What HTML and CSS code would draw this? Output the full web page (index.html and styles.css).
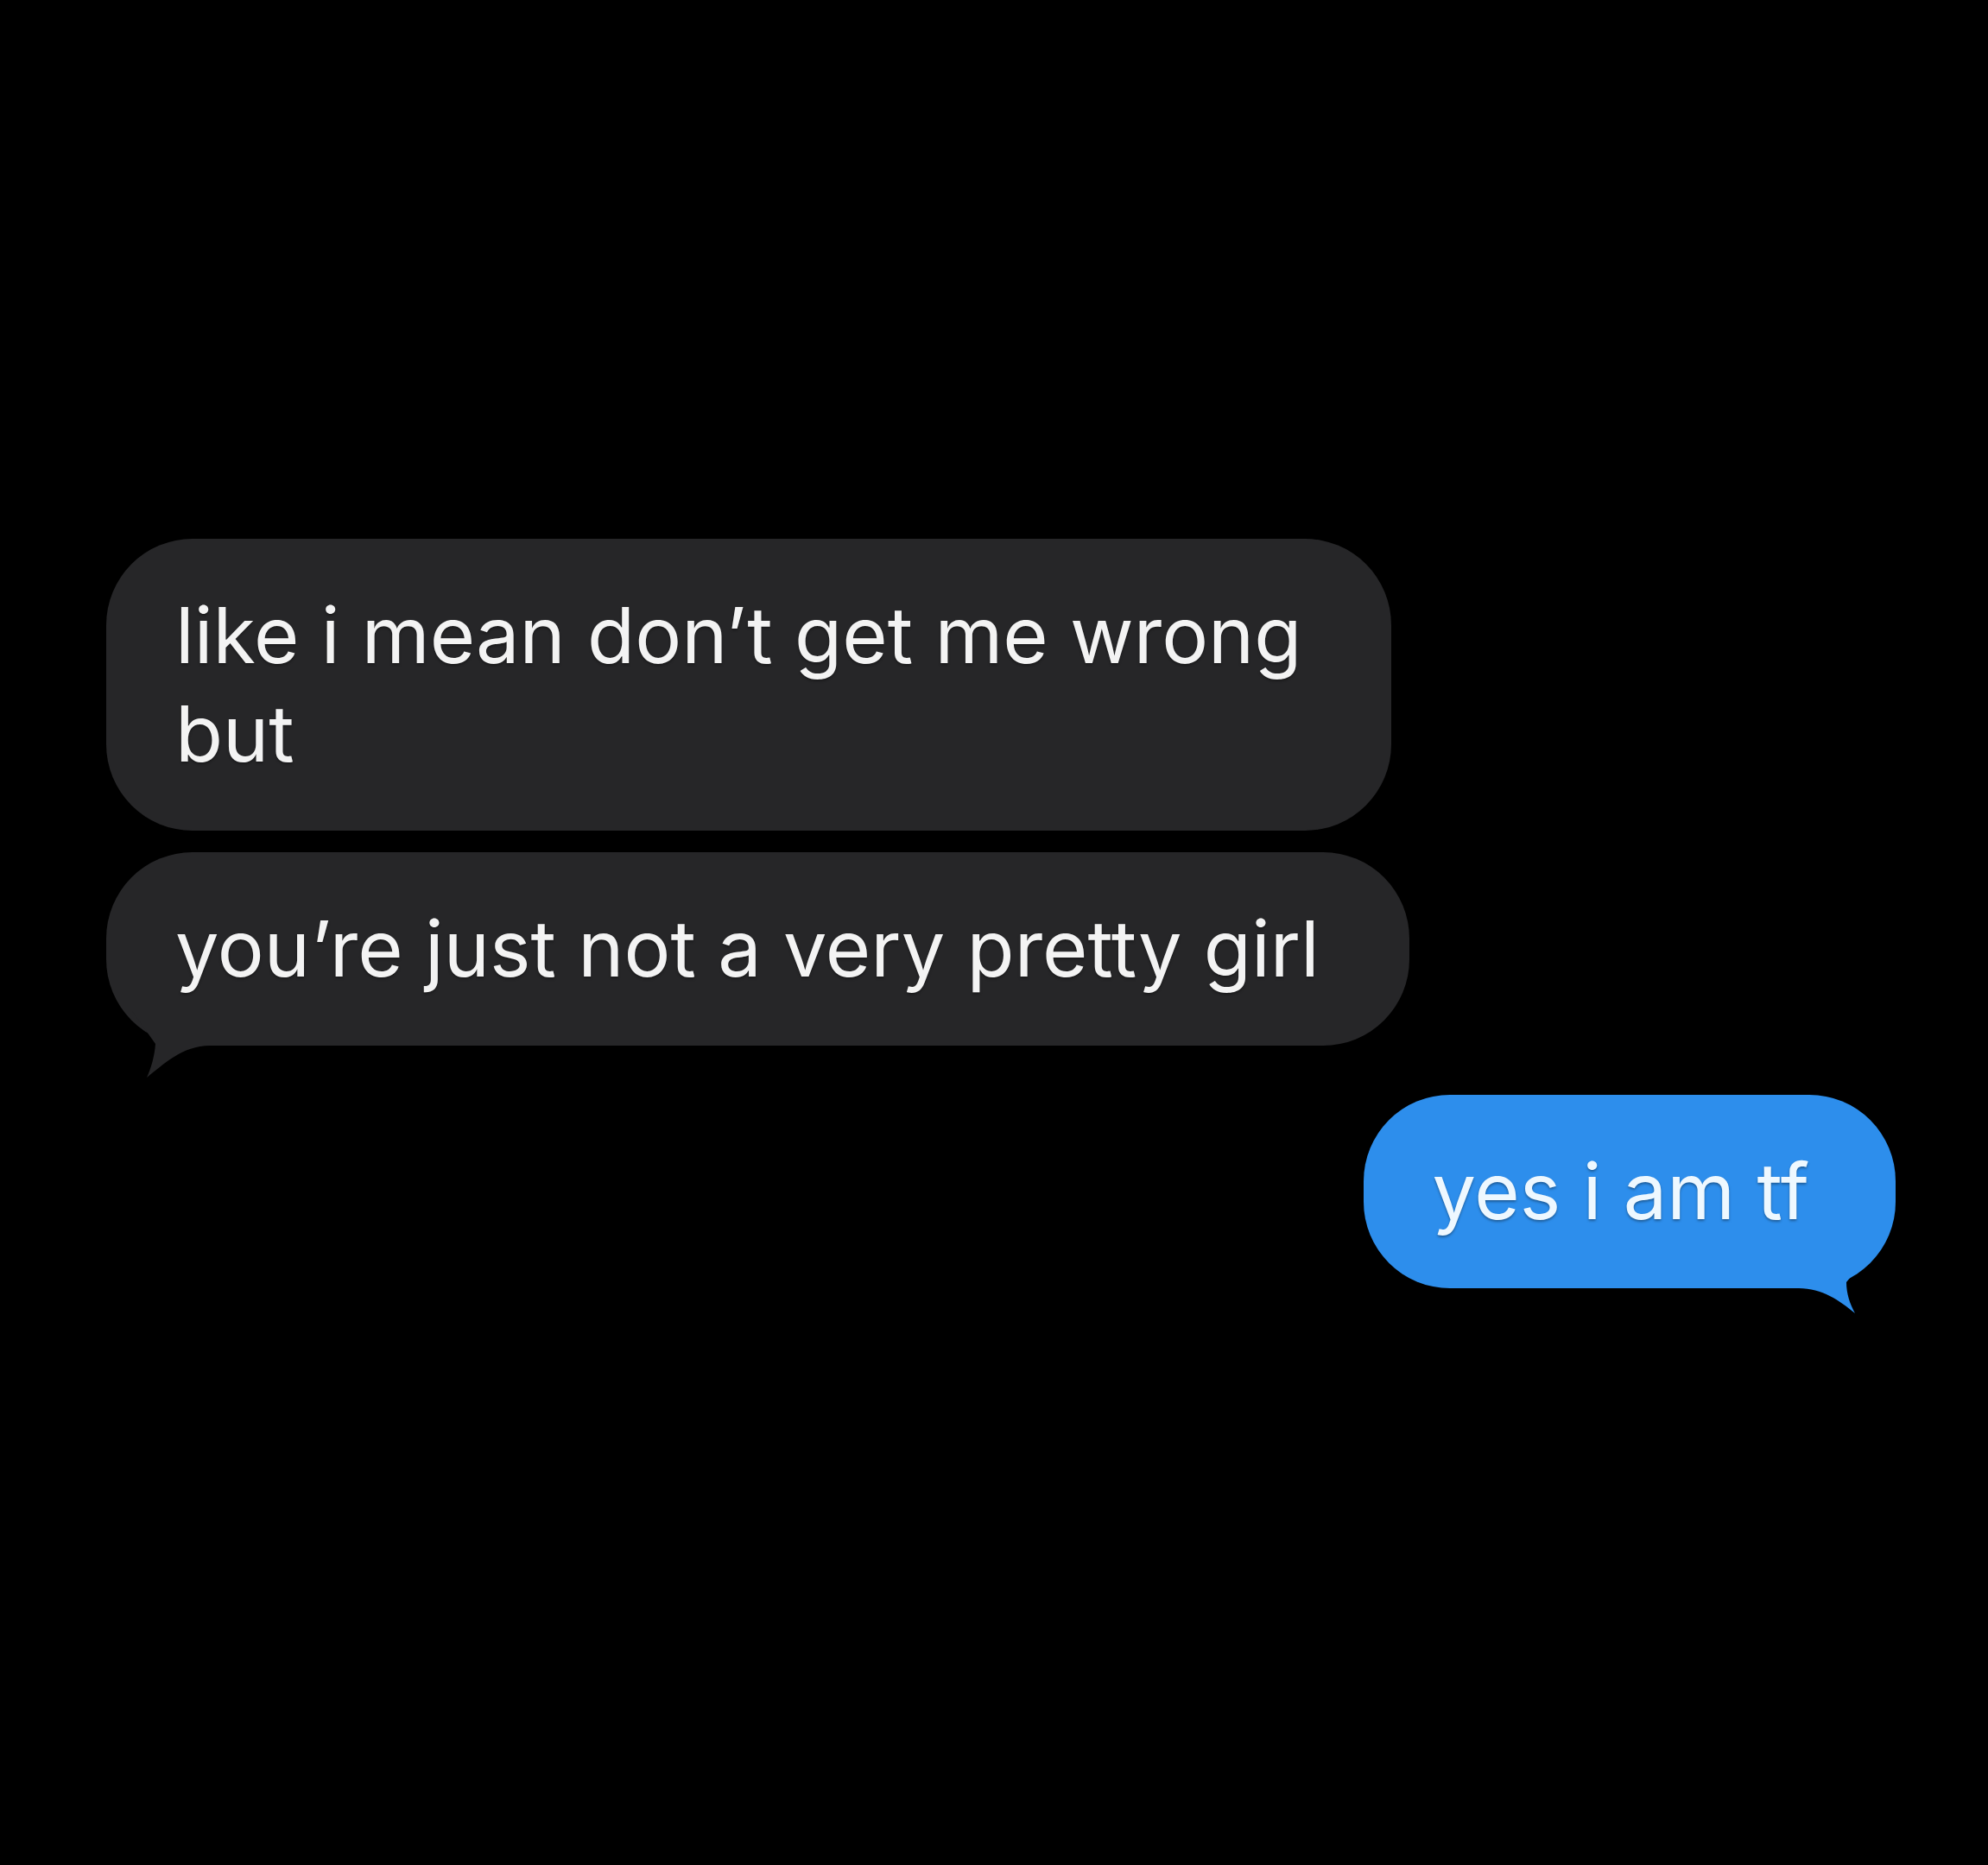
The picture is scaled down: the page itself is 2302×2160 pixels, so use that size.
FILE: index.html
```html
<!DOCTYPE html>
<html lang="en">
<head>
<meta charset="utf-8">
<title>Messages</title>
<link rel="stylesheet" href="styles.css">
</head>
<body>
<main class="thread">
  <div class="bubble received">like i mean don’t get me wrong<br>but</div>
  <div class="bubble received last">you’re just not a very pretty girl<svg class="tail tail-left" width="140" height="80" viewBox="0 0 140 80"><path d="M30 0 L140 0 L140 40 L120 40 C88 40 66 62 47 77 C52 66 56 52 57 38 L30 0 Z"/></svg></div>
  <div class="bubble sent">yes i am tf<svg class="tail tail-right" width="140" height="80" viewBox="0 0 140 80"><path d="M28 40 C55 40 75 54 93 69 C87 58 83 46 83 33 L110 0 L28 0 Z"/></svg></div>
</main>
</body>
</html>
```

FILE: styles.css
```css
html, body {
  margin: 0;
  padding: 0;
  background: #000;
}

body {
  width: 2302px;
  height: 2160px;
  overflow: hidden;
}

.thread {
  display: flex;
  flex-direction: column;
  padding: 624px 107px 0 123px;
  font-family: Inter, "Liberation Sans", Arial, sans-serif;
}

.bubble {
  position: relative;
  box-sizing: border-box;
  font-size: 90px;
  line-height: 114px;
  padding: 55px 104px 55px 80px;
  border-radius: 100px;
  text-shadow: 0 2px 3px rgba(0, 0, 0, 0.35);
}

.received {
  align-self: flex-start;
  background: #262628;
  color: #f3f3f3;
}

.received + .received {
  margin-top: 25px;
}

.sent {
  align-self: flex-end;
  margin-top: 57px;
  background: #2d8eec;
  color: #eef8ff;
  padding-right: 100px;
}

.tail {
  position: absolute;
  bottom: -40px;
}

.tail-left {
  left: 0;
  fill: #262628;
}

.tail-right {
  right: 0;
  fill: #2d8eec;
}
```
